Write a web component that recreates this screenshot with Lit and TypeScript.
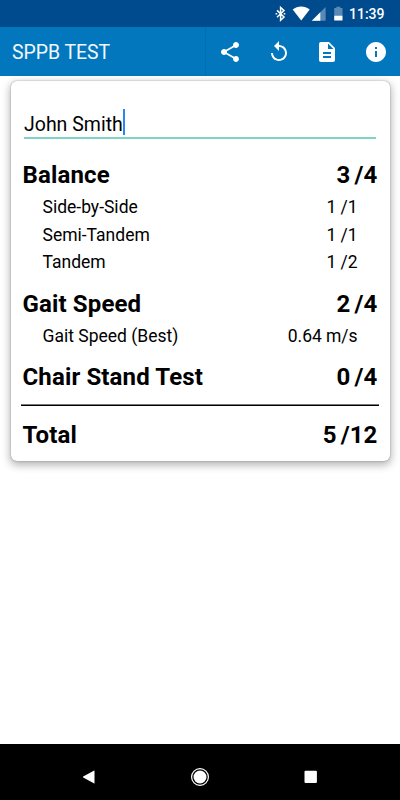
import { LitElement, html, css, svg } from "lit";
import { customElement } from "lit/decorators.js";

interface Item {
  label: string;
  value: string;
  unit: string;
}
interface Section extends Item {
  items: Item[];
}

const sections: Section[] = [
  {
    label: "Balance", value: "3", unit: "/4",
    items: [
      { label: "Side-by-Side", value: "1", unit: "/1" },
      { label: "Semi-Tandem", value: "1", unit: "/1" },
      { label: "Tandem", value: "1", unit: "/2" },
    ],
  },
  {
    label: "Gait Speed", value: "2", unit: "/4",
    items: [{ label: "Gait Speed (Best)", value: "0.64", unit: "m/s" }],
  },
  { label: "Chair Stand Test", value: "0", unit: "/4", items: [] },
];

const icons = {
  share: "M18 16.08c-.76 0-1.44.3-1.96.77L8.91 12.7c.05-.23.09-.46.09-.7s-.04-.47-.09-.7l7.05-4.11c.54.5 1.25.81 2.04.81 1.66 0 3-1.34 3-3s-1.34-3-3-3-3 1.34-3 3c0 .24.04.47.09.7L8.04 9.81C7.5 9.31 6.79 9 6 9c-1.66 0-3 1.34-3 3s1.34 3 3 3c.79 0 1.5-.31 2.04-.81l7.12 4.16c-.05.21-.08.43-.08.65 0 1.61 1.31 2.92 2.92 2.92s2.92-1.31 2.92-2.92-1.31-2.92-2.92-2.92z",
  replay: "M12 5V1L7 6l5 5V7c3.31 0 6 2.69 6 6s-2.69 6-6 6-6-2.69-6-6H4c0 4.42 3.58 8 8 8s8-3.58 8-8-3.58-8-8-8z",
  description: "M14 2H6c-1.1 0-1.99.9-1.99 2L4 20c0 1.1.89 2 1.99 2H18c1.1 0 2-.9 2-2V8l-6-6zm2 16H8v-2h8v2zm0-4H8v-2h8v2zm-3-5V3.5L18.5 9H13z",
  info: "M12 2C6.48 2 2 6.48 2 12s4.48 10 10 10 10-4.48 10-10S17.52 2 12 2zm1 15h-2v-6h2v6zm0-8h-2V7h2v2z",
};

@customElement("status-bar")
class StatusBar extends LitElement {
  static styles = css`
    :host {
      display: flex;
      align-items: center;
      justify-content: flex-end;
      height: 27px;
      padding-right: 17px;
      background: #004b8d;
      color: #fff;
      font-size: 14px;
      font-weight: 500;
    }
    svg { display: block; width: 76px; height: 27px; margin-right: 3px; flex: none; }
    .time { width: 34px; white-space: nowrap; line-height: 27px; padding-top: 1px; }
  `;
  render() {
    return html`
      <svg viewBox="270 0 76 27" fill="#fff">
        <path d="M277 10.4l7 6.6-3.4 3.2V7.4l3.4 3.2-7 6.6" fill="none" stroke="#fff" stroke-width="1.5"/>
        <path d="M275.6 12.9h1.6v1.6h-1.6zM283.7 12.9h1.6v1.6h-1.6z"/>
        <path d="M301.2 20.6L292.7 9.5c5-4 12-4 17 0z"/>
        <path d="M325.6 7v13.8h-13.8z" opacity=".35"/>
        <path d="M320.3 12.3v8.5h-8.5z"/>
        <path d="M334.2 8h2.2V6.7h3.8V8h2.3v8h-8.3z" opacity=".35"/>
        <path d="M334.2 15.8h8.3v4.1q0 .7-.7.7h-6.9q-.7 0-.7-.7z"/>
      </svg>
      <span class="time">11:39</span>
    `;
  }
}

@customElement("app-bar")
class AppBar extends LitElement {
  static styles = css`
    :host {
      display: flex;
      align-items: center;
      justify-content: space-between;
      height: 48.5px;
      padding: 0 0 0 12px;
      background: #0277bd;
      color: #f2f8fc;
    }
    .title { font-size: 19.4px; line-height: 48px; padding-top: 3px; white-space: nowrap; }
    .actions { display: flex; box-shadow: -1px 0 0 rgba(0, 40, 90, 0.1); }
    .action { display: grid; place-items: center; box-sizing: border-box; width: 48.6px; height: 48.5px; padding-top: 1px; }
    svg { width: 24px; height: 24px; fill: #fff; }
  `;
  render() {
    return html`
      <span class="title">SPPB TEST</span>
      <div class="actions">
        ${Object.values(icons).map(
          (d) => html`<div class="action"><svg viewBox="0 0 24 24">${svg`<path d=${d}></path>`}</svg></div>`
        )}
      </div>
    `;
  }
}

@customElement("score-card")
class ScoreCard extends LitElement {
  static styles = css`
    :host {
      display: block;
      box-sizing: border-box;
      height: 380px;
      margin: 5.5px 10.5px 0 10.5px;
      border-radius: 6px;
      background: #fff;
      color: #000;
      box-shadow: 0 0 1.5px rgba(0, 0, 0, 0.4), 0 3px 8px 1px rgba(0, 0, 0, 0.3);
    }
    .name {
      display: flex;
      align-items: center;
      box-sizing: border-box;
      height: 33px;
      margin: 0 14px 0 13.5px;
      border-bottom: 2px solid #7fd2c4;
      font-size: 19.5px;
    }
    .name span:first-child { padding-top: 5px; }
    .top { height: 25px; }
    .caret { width: 2px; height: 26px; background: #2a86f5; }
    .row { display: flex; justify-content: space-between; align-items: center; white-space: nowrap; }
    .head { height: 36px; padding: 0 12px 0 12px; font-size: 24px; font-weight: 700; letter-spacing: 0.14px; }
    .item { height: 27.5px; padding: 0 32px 0 32px; font-size: 17.5px; }
    .score { display: flex; gap: 4px; }
    .section { padding-bottom: 10px; }
    .list { padding-top: 18.4px; }
    .rule { height: 2px; margin: -1.9px 10.5px 11.5px 10.5px; background: linear-gradient(#777 50%, #000 50%); }
  `;
  row(cls: string, i: Item) {
    return html`<div class="row ${cls}">
      <span>${i.label}</span><span class="score"><span>${i.value}</span><span>${i.unit}</span></span>
    </div>`;
  }
  render() {
    return html`
      <div class="top"></div>
      <div class="name"><span>John Smith</span><span class="caret"></span></div>
      <div class="list">
        ${sections.map(
          (s) => html`<div class="section">${this.row("head", s)}${s.items.map((i) => this.row("item", i))}</div>`
        )}
      </div>
      <div class="rule"></div>
      ${this.row("head", { label: "Total", value: "5", unit: "/12" })}
    `;
  }
}

@customElement("nav-bar")
class NavBar extends LitElement {
  static styles = css`
    :host {
      display: flex;
      align-items: center;
      justify-content: center;
      gap: 87px;
      height: 56px;
      padding-top: 9px;
      box-sizing: border-box;
      background: #000;
    }
    svg { display: block; width: 24px; height: 24px; fill: #fff; }
  `;
  render() {
    return html`
      <svg viewBox="0 0 24 24"><path d="M17.5 6.1v11.8q0 .8-.7.4L6.2 12.6q-.9-.6 0-1.2L16.8 5.7q.7-.4.7.4z"/></svg>
      <svg viewBox="0 0 24 24"><circle cx="12" cy="12" r="8.4" fill="none" stroke="#fff" stroke-width="1.2"/><circle cx="12" cy="12" r="6.5"/></svg>
      <svg viewBox="0 0 24 24"><rect x="5.5" y="5.7" width="12.4" height="12.4" rx="1"/></svg>
    `;
  }
}

@customElement("app-root")
class AppRoot extends LitElement {
  static styles = css`
    :host {
      display: flex;
      flex-direction: column;
      height: 800px;
      background: #fff;
      font-family: Roboto, sans-serif;
    }
    .content { flex: 1; display: flow-root; }
  `;
  render() {
    return html`
      <status-bar></status-bar>
      <app-bar></app-bar>
      <div class="content"><score-card></score-card></div>
      <nav-bar></nav-bar>
    `;
  }
}
